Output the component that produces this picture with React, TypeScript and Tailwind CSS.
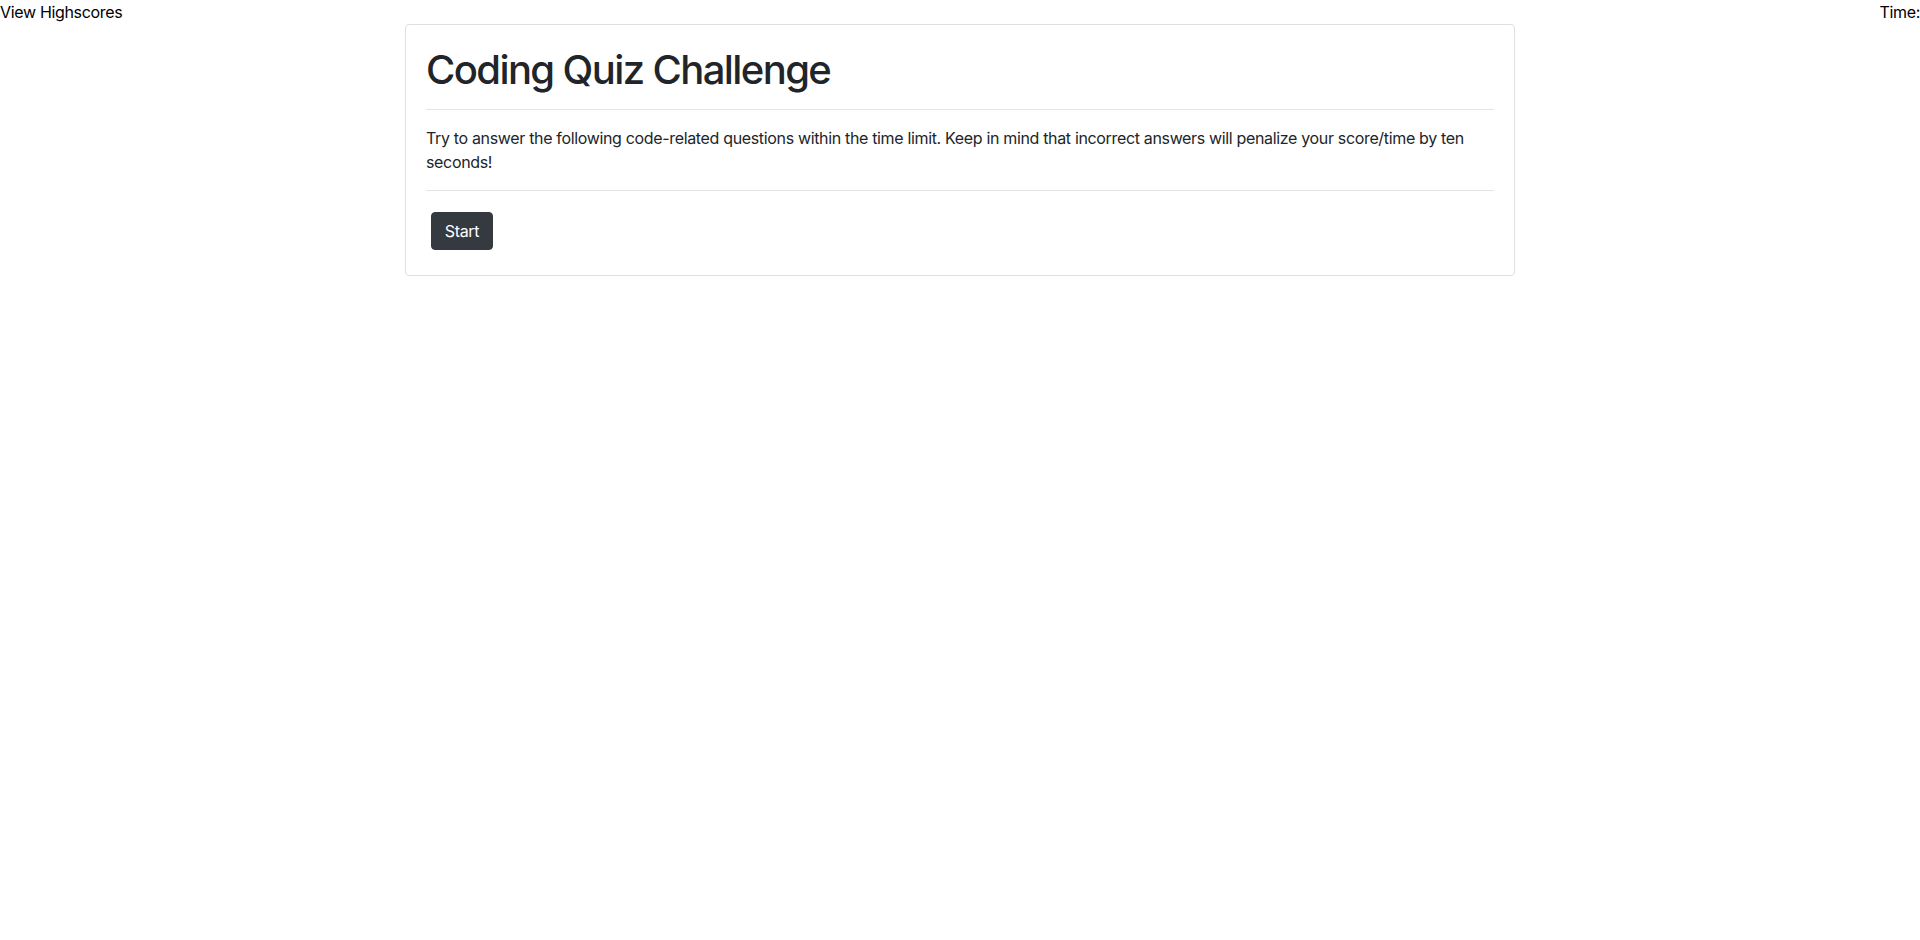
import clsx from 'clsx';

const font = "font-['Inter','Liberation_Sans',Arial,sans-serif]";

function TopBar() {
  return (
    <header className={clsx('flex h-6 items-center justify-between text-base leading-6 tracking-[-0.33px] text-black', font)}>
      <a href="#" className="text-black no-underline">View Highscores</a>
      <span>Time:</span>
    </header>
  );
}

function IntroCard() {
  return (
    <div className="mx-auto w-[1110px] rounded-[4px] border border-[#dfdfdf] bg-white">
      <div className={clsx('px-5 pt-[21px] pb-[25px] text-[#212529]', font)}>
        <h1 className="text-[40px] font-medium leading-[48px] tracking-[-1.6px]">Coding Quiz Challenge</h1>
        <hr className="mt-[15px] border-t border-[#e5e5e5]" />
        <p className="mt-4 text-base leading-6 tracking-[-0.34px]">
          Try to answer the following code-related questions within the time limit. Keep in mind that
          incorrect answers will penalize your score/time by ten seconds!
        </p>
        <hr className="mt-4 border-t border-[#e5e5e5]" />
        <button
          type="button"
          className="ml-[5px] mt-[21px] h-[38px] w-[62px] rounded-[4px] border border-[#343a40] bg-[#343a40] text-base leading-6 tracking-[-0.3px] text-white"
        >
          Start
        </button>
      </div>
    </div>
  );
}

export default function App() {
  return (
    <div className="min-h-[940px] bg-white">
      <TopBar />
      <IntroCard />
    </div>
  );
}
